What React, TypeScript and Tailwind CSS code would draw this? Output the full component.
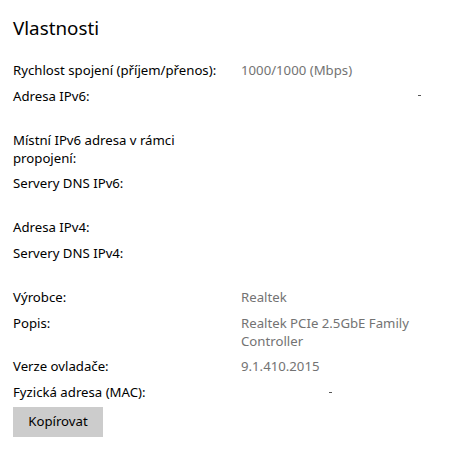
const ROWS: { label: string; value?: string; lines?: number; speck?: string }[] = [
  { label: 'Rychlost spojení (příjem/přenos):', value: '1000/1000 (Mbps)' },
  { label: 'Adresa IPv6:', lines: 2, speck: 'ml-[177px]' },
  { label: 'Místní IPv6 adresa v rámci propojení:' },
  { label: 'Servery DNS IPv6:', lines: 2 },
  { label: 'Adresa IPv4:' },
  { label: 'Servery DNS IPv4:', lines: 2 },
  { label: 'Výrobce:', value: 'Realtek' },
  { label: 'Popis:', value: 'Realtek PCIe 2.5GbE Family Controller' },
  { label: 'Verze ovladače:', value: '9.1.410.2015' },
  { label: 'Fyzická adresa (MAC):', speck: 'ml-[88px]' },
];

export default function App() {
  return (
    <div className="w-[471px] h-[472px] bg-white pl-[13px] pt-[14px] font-['Noto_Sans',sans-serif] text-black">
      <h2 className="text-[18.8px] leading-[28px] font-normal">Vlastnosti</h2>

      <div className="mt-[19px] flex flex-col gap-[7.8px]">
        {ROWS.map((row) => (
          <div key={row.label} className="flex text-[13.2px] leading-[18px]">
            <div className="w-[206px] mr-[22px]">{row.label}</div>
            <div className={`w-[190px] text-[#737373] ${row.lines === 2 ? 'min-h-[36px]' : ''}`}>
              {row.value}
              {row.speck && (
                <div className={`h-[18px] flex items-center ${row.speck}`}>
                  <span className="block w-[3px] h-[1px] bg-[#555]" />
                </div>
              )}
            </div>
          </div>
        ))}
      </div>

      <button className="mt-[6px] w-[90px] h-[30px] bg-[#cccccc] text-[13.2px] text-black">
        Kopírovat
      </button>
    </div>
  );
}
